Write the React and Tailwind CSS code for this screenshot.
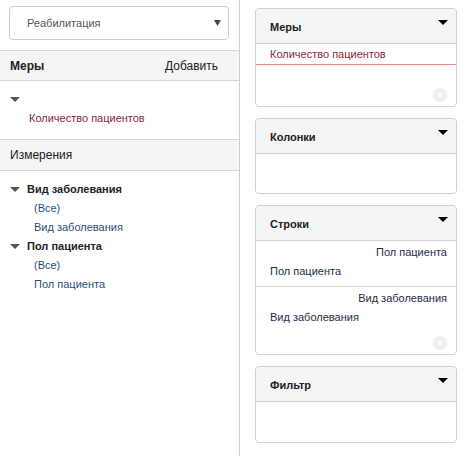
import React from "react";

const font = { fontFamily: '"Liberation Sans", Arial, sans-serif' };

function Caret({ className = "", w = 10, h = 5 }) {
  return (
    <svg width={w} height={h} viewBox={`0 0 ${w} ${h}`} className={className}>
      <path d={`M0 0 L${w} 0 L${w / 2} ${h} Z`} fill="currentColor" />
    </svg>
  );
}

function ClearIcon() {
  return (
    <svg width="14" height="14" viewBox="0 0 14 14">
      <circle cx="7" cy="7" r="7" fill="#eeeeee" />
      <path d="M4.7 4.7 L9.3 9.3 M9.3 4.7 L4.7 9.3" stroke="#ffffff" strokeWidth="1.6" />
    </svg>
  );
}

function Card({ title, children, height }) {
  return (
    <div className="mb-[11px] rounded-[4px] border border-[#d0d0d0] bg-white">
      <div className="flex h-[35px] items-start justify-between rounded-t-[4px] border-b border-[#d0d0d0] bg-[#f5f5f5] pl-[14px] pr-[8px]">
        <span className="mt-[10px] text-[11px] font-bold text-[#222]">{title}</span>
        <Caret className="mt-[11px] text-black" w={10} h={5} />
      </div>
      <div className={`relative ${height}`}>{children}</div>
    </div>
  );
}

function TreeGroup({ name }) {
  return (
    <div>
      <div className="flex h-[19px] items-center">
        <Caret className="ml-[10px] mr-[7px] text-[#555]" />
        <span className="text-[11px] font-bold text-[#222]">{name}</span>
      </div>
      <div className="flex h-[19px] items-center pl-[34px] text-[11px] text-[#1f4f7a]">(Все)</div>
      <div className="flex h-[19px] items-center pl-[34px] text-[11px] text-[#1f4f7a]">{name}</div>
    </div>
  );
}

export default function App() {
  return (
    <div className="flex h-[456px] w-[468px] bg-white" style={font}>
      {/* left column */}
      <div className="w-[240px] border-r border-[#cfcfcf]">
        <div className="px-[9px] pb-[10px] pt-[6px]">
          <div className="flex h-[34px] w-[220px] items-center justify-between rounded-[4px] border border-[#cccccc] pl-[17px] pr-[7px]">
            <span className="text-[11px] text-[#555]">Реабилитация</span>
            <Caret className="text-[#444]" w={7} h={6} />
          </div>
        </div>
        <div className="flex h-[31px] items-center justify-between border-y border-[#d6d6d6] bg-[#f5f5f5] pl-[10px] pr-[21px]">
          <span className="text-[12px] font-bold text-[#222]">Меры</span>
          <span className="text-[12px] text-[#222]">Добавить</span>
        </div>
        <div className="h-[58px] pt-[16px]">
          <Caret className="ml-[10px] text-[#555]" />
          <div className="mt-[8px] pl-[29px] text-[11px] text-[#8a1f3c]">Количество пациентов</div>
        </div>
        <div className="flex h-[32px] items-center border-y border-[#d6d6d6] bg-[#f5f5f5] pl-[10px]">
          <span className="text-[12px] text-[#222]">Измерения</span>
        </div>
        <div className="pt-[9px]">
          <TreeGroup name="Вид заболевания" />
          <TreeGroup name="Пол пациента" />
        </div>
      </div>

      {/* right column */}
      <div className="flex-1 pl-[15px] pr-[11px] pt-[8px]">
        <Card title="Меры" height="h-[62px]">
          <div className="flex h-[21px] items-center border-b border-[#ee8a8a] pl-[14px] text-[11px] text-[#8a1f3c]">
            Количество пациентов
          </div>
          <div className="absolute bottom-[4px] right-[9px]">
            <ClearIcon />
          </div>
        </Card>
        <Card title="Колонки" height="h-[39px]" />
        <Card title="Строки" height="h-[113px]">
          <div className="border-b border-[#d6d6d6] pb-[5px] pt-[2px] text-[11px] text-[#1e2d48]">
            <div className="h-[18px] pr-[9px] text-right leading-[18px]">Пол пациента</div>
            <div className="h-[20px] pl-[14px] leading-[20px]">Пол пациента</div>
          </div>
          <div className="pt-[2px] text-[11px] text-[#1e2d48]">
            <div className="h-[18px] pr-[9px] text-right leading-[18px]">Вид заболевания</div>
            <div className="h-[20px] pl-[14px] leading-[20px]">Вид заболевания</div>
          </div>
          <div className="absolute bottom-[4px] right-[9px]">
            <ClearIcon />
          </div>
        </Card>
        <Card title="Фильтр" height="h-[40px]" />
      </div>
    </div>
  );
}
